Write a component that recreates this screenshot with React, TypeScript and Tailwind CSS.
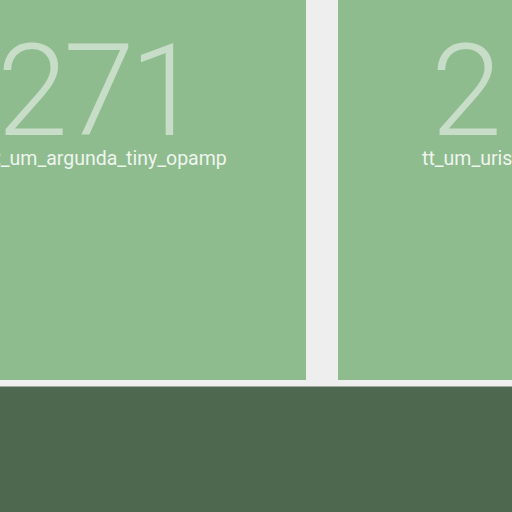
const tiles = [
  { count: 271, name: "tt_um_argunda_tiny_opamp" },
  { count: 2, name: "tt_um_urish_charge_pump" },
];

function Tile({ count, name }: { count: number; name: string }) {
  return (
    <div className="flex h-[380px] w-[402px] shrink-0 flex-col items-start bg-[#8fbc8f] pl-[84px] pt-[37px]">
      <div className="ml-[9px] text-[128px] font-light leading-[108px] tracking-[-0.036em] text-[#c7ddc7]">
        {count}
      </div>
      <div className="whitespace-nowrap text-[19.5px] leading-7 text-[#eef5ee]">
        {name}
      </div>
    </div>
  );
}

export default function App() {
  return (
    <div
      className="flex h-[512px] w-[512px] flex-col overflow-hidden bg-[#eeeeee]"
      style={{ fontFamily: "Roboto, 'Liberation Sans', sans-serif" }}
    >
      <div className="-ml-[96px] flex gap-8">
        {tiles.map((t) => (
          <Tile key={t.name} {...t} />
        ))}
      </div>
      <div className="mt-[6px] flex-1 border-t border-[#9fa89f] bg-[#4e6850]" />
    </div>
  );
}
